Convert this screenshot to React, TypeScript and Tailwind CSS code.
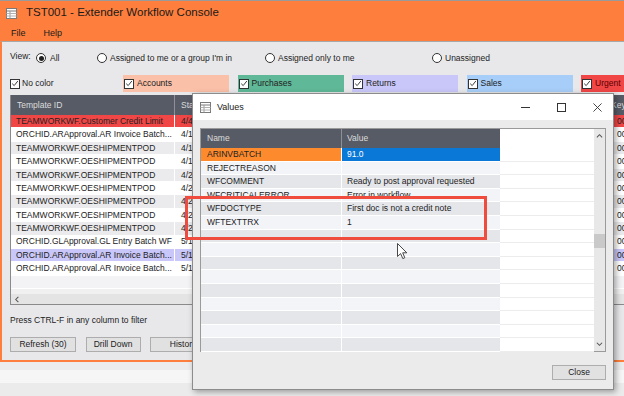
import React from 'react';

type MainRow = { id: string; d: string; key: string; kind?: 'urgent' | 'sel' };

const mainRows: MainRow[] = [
  { id: 'TEAMWORKWF.Customer Credit Limit', d: '4/4/24', key: '00412', kind: 'urgent' },
  { id: 'ORCHID.ARApproval.AR Invoice Batch...', d: '4/15/24', key: '00388' },
  { id: 'TEAMWORKWF.OESHIPMENTPOD', d: '4/17/24', key: '00391' },
  { id: 'TEAMWORKWF.OESHIPMENTPOD', d: '4/18/24', key: '00392' },
  { id: 'TEAMWORKWF.OESHIPMENTPOD', d: '4/22/24', key: '00395' },
  { id: 'TEAMWORKWF.OESHIPMENTPOD', d: '4/23/24', key: '00396' },
  { id: 'TEAMWORKWF.OESHIPMENTPOD', d: '4/24/24', key: '00398' },
  { id: 'TEAMWORKWF.OESHIPMENTPOD', d: '4/25/24', key: '00401' },
  { id: 'TEAMWORKWF.OESHIPMENTPOD', d: '4/26/24', key: '00403' },
  { id: 'ORCHID.GLApproval.GL Entry Batch WF', d: '5/1/24', key: '00405' },
  { id: 'ORCHID.ARApproval.AR Invoice Batch...', d: '5/1/24', key: '00407', kind: 'sel' },
  { id: 'ORCHID.ARApproval.AR Invoice Batch...', d: '5/1/24', key: '00409' },
];

const values = [
  { name: 'ARINVBATCH', value: '91.0' },
  { name: 'REJECTREASON', value: '' },
  { name: 'WFCOMMENT', value: 'Ready to post approval requested' },
  { name: 'WFCRITICALERROR', value: 'Error in workflow' },
  { name: 'WFDOCTYPE', value: 'First doc is not a credit note' },
  { name: 'WFTEXTTRX', value: '1' },
];

const Check = () => (
  <span className="w-[10px] h-[10px] border border-[#333] bg-white flex items-center justify-center shrink-0">
    <svg viewBox="0 0 10 10" className="w-[9px] h-[9px]">
      <path d="M1.5 5.2 L4 7.6 L8.6 1.8" fill="none" stroke="#222" strokeWidth="1.1" />
    </svg>
  </span>
);

const Radio = ({ on }: { on?: boolean }) => (
  <span className="w-[10px] h-[10px] rounded-full border border-[#333] bg-white flex items-center justify-center shrink-0">
    {on && <span className="w-[5px] h-[5px] rounded-full bg-[#222]" />}
  </span>
);

const WinIcon = () => (
  <svg viewBox="0 0 11 11" className="w-[11px] h-[11px] shrink-0">
    <rect x="0.5" y="0.5" width="10" height="10" fill="#fff" stroke="#7a7a7a" />
    <line x1="0.5" y1="3" x2="10.5" y2="3" stroke="#7a7a7a" />
    <line x1="4" y1="3" x2="4" y2="10.5" stroke="#9a9a9a" />
    <line x1="0.5" y1="5.5" x2="10.5" y2="5.5" stroke="#b0b0b0" />
    <line x1="0.5" y1="8" x2="10.5" y2="8" stroke="#b0b0b0" />
  </svg>
);

const ColorBox = ({ label, bg, text = 'text-[#222]' }: { label: string; bg: string; text?: string }) => (
  <div className={`w-[106px] h-[17px] shrink-0 flex items-center pl-[1px] gap-[3px] ${bg}`}>
    <Check />
    <span className={text}>{label}</span>
  </div>
);

const Chevron = ({ dir }: { dir: 'up' | 'down' | 'left' }) => {
  const d = dir === 'up' ? 'M1 5 L4 2 L7 5' : dir === 'down' ? 'M1 2 L4 5 L7 2' : 'M5 1 L2 4 L5 7';
  return (
    <svg viewBox="0 0 8 8" className="w-[7px] h-[7px]">
      <path d={d} fill="none" stroke="#555" strokeWidth="1.2" />
    </svg>
  );
};

export default function App() {
  return (
    <div className="w-[624px] h-[396px] overflow-hidden relative bg-[#ececec] text-[8.5px] leading-none text-[#222] font-['Liberation_Sans',Arial,sans-serif]">
      {/* Main window */}
      <div className="h-[362px] flex flex-col border-t border-[#9a9a9a]">
        <div className="h-[40px] bg-[#fe7f3d] flex flex-col">
          <div className="h-[24px] flex items-center pl-[6px] gap-[9px]">
            <WinIcon />
            <span className="text-[11.5px] text-[#1a1a1a]">TST001 - Extender Workflow Console</span>
          </div>
          <div className="h-[16px] flex items-center pl-[11px] gap-[18px] text-[9px] text-[#1a1a1a]">
            <span>File</span>
            <span>Help</span>
          </div>
        </div>

        <div className="flex-1 flex flex-col bg-[#e8e8eb] border-t border-t-[#a8a8a8] border-l-2 border-l-[#fe7f3d] border-b-2 border-b-[#fe7f3d] pl-[8px] pt-[10px] pb-[8px]">
          {/* View row */}
          <div className="h-[12px] flex items-center">
            <span className="w-[26px] shrink-0 -mt-[3px]">View:</span>
            <div className="w-[61px] shrink-0 flex items-center gap-[4px]"><Radio on /><span>All</span></div>
            <div className="w-[168px] shrink-0 flex items-center gap-[3px]"><Radio /><span>Assigned to me or a group I'm in</span></div>
            <div className="w-[167px] shrink-0 flex items-center gap-[3px]"><Radio /><span>Assigned only to me</span></div>
            <div className="shrink-0 flex items-center gap-[3px]"><Radio /><span>Unassigned</span></div>
          </div>

          {/* Color row */}
          <div className="mt-[11px] h-[17px] flex items-center gap-[8.5px]">
            <div className="w-[104.5px] shrink-0 flex items-center gap-[2px]"><Check /><span>No color</span></div>
            <ColorBox label="Accounts" bg="bg-[#fbc0a8]" />
            <ColorBox label="Purchases" bg="bg-[#5fb898]" />
            <ColorBox label="Returns" bg="bg-[#c9c7f9]" />
            <ColorBox label="Sales" bg="bg-[#a7cef8]" />
            <ColorBox label="Urgent" bg="bg-[#f04646]" text="text-[#5a0000]" />
          </div>

          {/* Main grid */}
          <div className="mt-[3px] h-[210px] flex flex-col border-l border-[#8a8a8a] bg-[#f0f0f0] overflow-hidden">
            <div className="h-[20px] shrink-0 flex items-center bg-[#575b66] text-[#dcdcdc]">
              <span className="w-[164px] shrink-0 pl-[6px] border-r border-[#8d9099] h-full flex items-center">Template ID</span>
              <span className="w-[100px] shrink-0 pl-[6px]">Start</span>
              <span className="w-[120px] shrink-0" />
              <span className="w-[110px] shrink-0" />
              <span className="w-[104px] shrink-0" />
              <span className="shrink-0 pl-[2px]">Key</span>
            </div>
            {mainRows.map((r, i) => {
              const bg =
                r.kind === 'urgent' ? 'bg-[#f04646]' : r.kind === 'sel' ? 'bg-[#c9c7f9]' : i % 2 === 0 ? 'bg-[#ebebed]' : 'bg-white';
              return (
                <div key={i} className={`h-[13.4px] shrink-0 flex items-center border-b border-white ${bg}`}>
                  <span className="w-[164px] shrink-0 pl-[5px] border-r border-white h-full flex items-center whitespace-nowrap">{r.id}</span>
                  <span className="w-[100px] shrink-0 pl-[6px] whitespace-nowrap">{r.d}</span>
                  <span className="w-[120px] shrink-0" />
                  <span className="w-[110px] shrink-0" />
                  <span className="w-[104px] shrink-0" />
                  <span className="shrink-0 pl-[8px] whitespace-nowrap">{r.key}</span>
                </div>
              );
            })}
            <div className="h-[13.4px] shrink-0 bg-[#f3f3f5] border-b border-white" />
            <div className="flex-1" />
            <div className="h-[11px] shrink-0 bg-[#e4e4e4] flex items-center pl-[3px] border-b border-[#8a8a8a]">
              <Chevron dir="left" />
            </div>
          </div>

          <div className="mt-[9px] h-[12px] flex items-center">Press CTRL-F in any column to filter</div>

          <div className="mt-[11px] h-[15px] flex gap-[9.5px]">
            <button className="w-[66px] shrink-0 h-full bg-[#e1e1e1] border border-[#adadad] text-[8.5px]">Refresh (30)</button>
            <button className="w-[55px] shrink-0 h-full bg-[#e1e1e1] border border-[#adadad] text-[8.5px]">Drill Down</button>
            <button className="w-[66px] shrink-0 h-full bg-[#e1e1e1] border border-[#adadad] text-[8.5px]">History</button>
          </div>
        </div>
      </div>

      {/* Whatever lies below */}
      <div className="h-[8px] bg-[#ececec]" />
      <div className="h-[13px] bg-[#f6f6f6]" />
      <div className="h-[13px] bg-[#ebebeb]" />

      {/* Values dialog */}
      <div className="absolute left-[192px] top-[93px] w-[422px] h-[297px] flex flex-col bg-[#ebebeb] border border-[#8c8c8c] shadow-[2px_2px_6px_rgba(0,0,0,0.35)]">
        <div className="h-[26px] shrink-0 bg-white flex items-center pl-[7px]">
          <WinIcon />
          <span className="ml-[6px] text-[9px]">Values</span>
          <div className="ml-auto flex h-full gap-[4px]">
            <div className="w-[32px] flex items-center justify-center">
              <span className="w-[9px] h-px bg-[#333]" />
            </div>
            <div className="w-[32px] flex items-center justify-center">
              <span className="w-[9px] h-[9px] border border-[#333]" />
            </div>
            <div className="w-[32px] flex items-center justify-center">
              <svg viewBox="0 0 10 10" className="w-[9px] h-[9px]">
                <path d="M0.5 0.5 L9.5 9.5 M9.5 0.5 L0.5 9.5" stroke="#333" strokeWidth="1" />
              </svg>
            </div>
          </div>
        </div>

        <div className="flex-1 flex flex-col px-[7px] pt-[8px] pb-[8px]">
          <div className="h-[224px] flex border border-[#9a9a9a] bg-white">
            <div className="flex-1 flex flex-col">
              <div className="h-[19px] shrink-0 flex">
                <span className="w-[141px] shrink-0 bg-[#575b66] text-[#dcdcdc] pl-[6px] flex items-center border-r border-[#8d9099]">Name</span>
                <span className="w-[158px] shrink-0 bg-[#575b66] text-[#dcdcdc] pl-[5px] flex items-center">Value</span>
                <span className="flex-1 bg-white" />
              </div>
              {Array.from({ length: 15 }).map((_, i) => {
                const v = values[i];
                const alt = i % 2 === 1 ? 'bg-[#f3f4f8]' : 'bg-[#e5e6ea]';
                const nameBg = i === 0 ? 'bg-[#fd8a2c]' : alt;
                const valBg = i === 0 ? 'bg-[#0a78d6] text-white' : alt;
                return (
                  <div key={i} className="h-[13.6px] shrink-0 flex">
                    <span className={`w-[141px] shrink-0 pl-[6px] flex items-center border-r border-b border-white whitespace-nowrap ${nameBg}`}>{v?.name}</span>
                    <span className={`w-[158px] shrink-0 pl-[5px] flex items-center border-b border-white whitespace-nowrap ${valBg}`}>{v?.value}</span>
                    <span className="flex-1 bg-white border-b border-[#ececec]" />
                  </div>
                );
              })}
            </div>
            <div className="w-[11px] shrink-0 bg-[#e8e8e8] flex flex-col items-center">
              <div className="h-[14px] flex items-center"><Chevron dir="up" /></div>
              <div className="h-[91px]" />
              <div className="w-[11px] h-[14px] bg-[#c9c9c9]" />
              <div className="flex-1" />
              <div className="h-[14px] flex items-center"><Chevron dir="down" /></div>
            </div>
          </div>

          <div className="mt-[13px] h-[15px] flex justify-end">
            <button className="w-[54px] h-full bg-[#e1e1e1] border border-[#adadad] text-[8.5px]">Close</button>
          </div>
        </div>
      </div>

      {/* Annotation rectangle */}
      <div className="absolute left-[185px] top-[196px] w-[302px] h-[44px] border-[3px] border-[#f04c3e]" />

      {/* Mouse cursor */}
      <svg viewBox="0 0 11 17" className="absolute left-[397px] top-[243px] w-[11px] h-[17px]">
        <path d="M0.5 0.5 L0.5 13.5 L3.6 10.6 L5.8 15.6 L7.8 14.7 L5.7 9.8 L9.8 9.8 Z" fill="#fff" stroke="#333" strokeWidth="0.9" strokeLinejoin="round" />
      </svg>
    </div>
  );
}
